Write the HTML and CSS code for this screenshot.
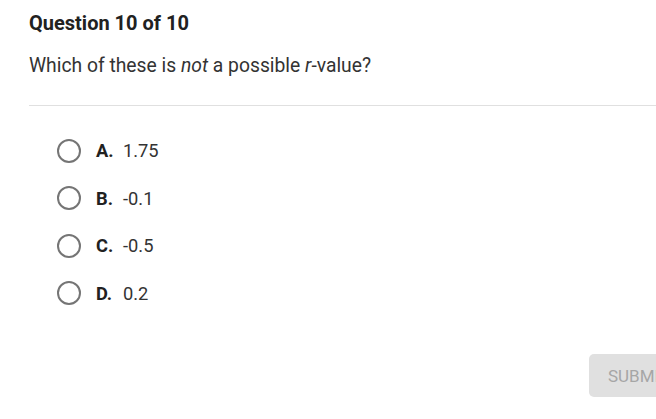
FILE: index.html
```html
<!DOCTYPE html>
<html lang="en">
  <head>
    <meta charset="UTF-8" />
    <meta name="viewport" content="width=device-width, initial-scale=1.0" />
    <title>Question 10 of 10</title>
    <link rel="stylesheet" href="styles.css">
  </head>
  <body>
    <div class="quiz">
      <h2 class="title">Question 10 of 10</h2>
      <p class="prompt">Which of these is <em>not</em> a possible <em>r</em>-value?</p>
      <hr class="divider" />

      <ul class="choices">
        <li class="choice"><span class="radio"></span><b>A.</b><span>1.75</span></li>
        <li class="choice"><span class="radio"></span><b>B.</b><span>-0.1</span></li>
        <li class="choice"><span class="radio"></span><b>C.</b><span>-0.5</span></li>
        <li class="choice"><span class="radio"></span><b>D.</b><span>0.2</span></li>
      </ul>

      <div class="actions">
        <button class="submit" disabled>SUBMIT</button>
      </div>
    </div>
  </body>
</html>
```

FILE: styles.css
```css
body {
  margin: 0;
  font-family: Roboto, "Liberation Sans", sans-serif;
  color: #212121;
  background: #fff;
  overflow: hidden;
}
.quiz {
  padding: 11px 0 0 29px;
}
.title {
  margin: 0;
  font-size: 20px;
  font-weight: 700;
  line-height: 24px;
}
.prompt {
  margin: 19px 0 0;
  font-size: 19.3px;
  line-height: 24px;
  color: #333;
}
.divider {
  margin: 27px 0 0;
  border: none;
  border-top: 1px solid #e0e0e0;
}
.choices {
  list-style: none;
  margin: 21px 0 0;
  padding: 0 0 0 28px;
}
.choice {
  display: flex;
  align-items: center;
  height: 47.5px;
  font-size: 18.3px;
  color: #333;
}
.radio {
  width: 20px;
  height: 20px;
  border: 2px solid #757575;
  border-radius: 50%;
  margin-right: 15px;
}
.choice b {
  width: 27px;
  color: #212121;
}
.actions {
  display: flex;
  justify-content: flex-end;
  margin-top: 37px;
}
.submit {
  margin-right: -40px;
  width: 107px;
  height: 43px;
  padding: 0 0 0 19px;
  text-align: left;
  font-family: inherit;
  font-size: 17px;
  color: #a6a6a6;
  background: #e0e0e0;
  border: none;
  border-radius: 5px;
}
```
